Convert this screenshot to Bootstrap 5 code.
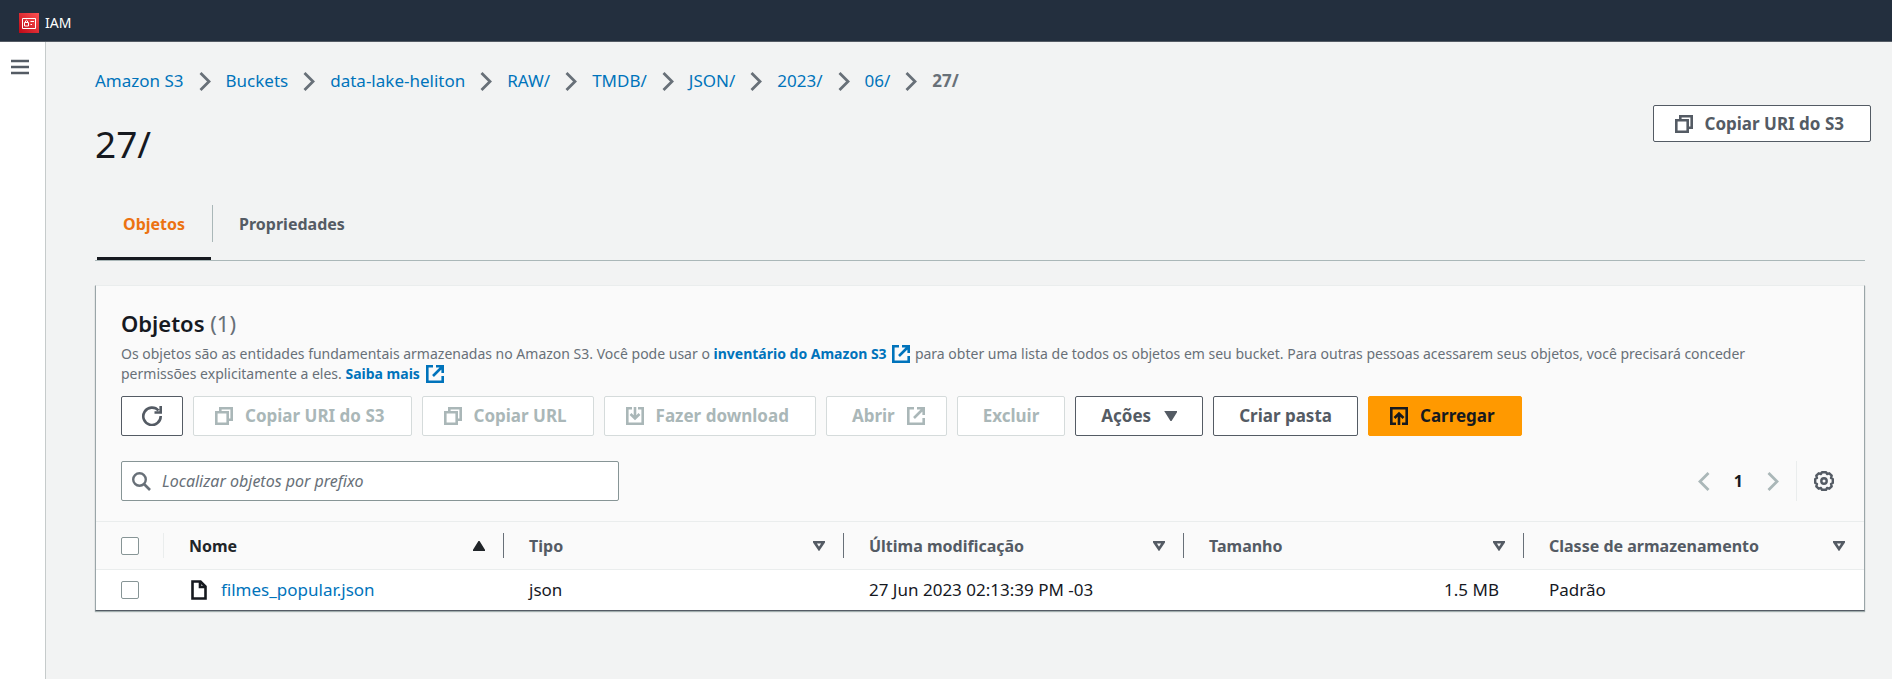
<!DOCTYPE html>
<html lang="pt-BR">
<head>
<meta charset="utf-8">
<meta name="viewport" content="width=device-width, initial-scale=1">
<title>27/ - Amazon S3</title>
<link href="https://cdn.jsdelivr.net/npm/bootstrap@5.3.0/dist/css/bootstrap.min.css" rel="stylesheet">
<script src="https://cdn.jsdelivr.net/npm/bootstrap@5.3.0/dist/js/bootstrap.bundle.min.js" defer></script>
<style>
:root { --ink: #16191f; --slate: #545b64; --muted: #687078; --blue: #0073bb; --line: #eaeded; --steel: #aab7b8; }
body { font-family: "Noto Sans", "Open Sans", sans-serif; font-size: 17px; line-height: 22px; color: var(--ink); background: #f2f3f3; }
a { color: var(--blue); text-decoration: none; }
a:hover { color: #0a4a74; text-decoration: underline; }
svg { display: block; flex: none; fill: none; stroke: currentColor; stroke-width: 2; }
.top-bar { height: 42px; background: #232f3e; border-bottom: 1px solid #545b64; padding: 4px 19px 0; }
.top-bar a { color: #fff; font-size: 14px; gap: 6px; }
.side-rail { width: 46px; background: #fff; border-right: 1px solid #c6cbcb; padding: 16px 0 0 10px; }
.icon-btn { background: none; border: 0; padding: 0; color: var(--slate); }
.page-main { padding: 28px 27px 28px 49px; min-width: 0; }
.crumbs { gap: 15px; }
.crumbs li { display: flex; align-items: center; gap: 15px; }
.crumbs svg, .muted-ink { color: var(--muted); }
.title-row { margin: 13px -6px 0 0; }
.page-title { font-size: 37px; line-height: 44px; font-weight: 400; margin: 17px 0 0; }
.aws-btn { --bs-btn-font-size: 17px; --bs-btn-font-weight: 700; --bs-btn-line-height: 22px; --bs-btn-border-radius: 2px; --bs-btn-padding-x: 25px; --bs-btn-padding-y: 0;
  --bs-btn-color: var(--slate); --bs-btn-bg: #fff; --bs-btn-border-color: var(--slate); --bs-btn-hover-color: var(--ink); --bs-btn-hover-bg: #fafafa; --bs-btn-hover-border-color: var(--ink);
  --bs-btn-disabled-color: var(--steel); --bs-btn-disabled-bg: #fff; --bs-btn-disabled-border-color: #d5dbdb; --bs-btn-disabled-opacity: 1;
  display: inline-flex; align-items: center; justify-content: center; gap: 12px; height: 40px; white-space: nowrap; }
.aws-btn.lead-icon { padding-left: 21px; padding-right: 26px; }
.aws-btn.trail-icon { padding-right: 21px; }
.aws-btn.short { height: 37px; }
.aws-btn.orange { --bs-btn-color: var(--ink); --bs-btn-bg: #f90; --bs-btn-border-color: #f90; --bs-btn-hover-bg: #ec7211; --bs-btn-hover-border-color: #ec7211; }
.tab-strip { margin-top: 39px; border-bottom: 1px solid var(--steel); padding-left: 2px; }
.tab-strip li { display: flex; }
.tab-strip a { display: block; height: 55px; padding: 8px 26px 0; font-size: 16px; font-weight: 700; color: var(--slate); border-bottom: 3px solid transparent; }
.tab-strip a.active { color: #ec7211; border-bottom-color: var(--ink); }
.tab-strip li + li::before { content: ""; width: 1px; height: 37px; background: var(--steel); margin-left: 1px; }
.panel { margin-top: 24px; background: #fff; border: 1px solid #9aa5a8; border-top-color: var(--line); border-bottom-color: #545b64; box-shadow: 0 1px 1px #00202055; }
.panel-top { background: #fafafa; padding: 23px 25px 20px; }
.panel-top h2 { font-size: 22px; line-height: 28px; font-weight: 600; margin: 0; }
.intro { font-size: 14px; line-height: 20px; color: var(--muted); margin: 7px 0 0; padding-right: 48px; }
.intro a { font-weight: 700; }
.intro svg { display: inline-block; vertical-align: -4px; margin: 0 1px 0 2px; }
.actions { gap: 10px; margin-top: 12px; }
.tools { margin-top: 25px; }
.search-box { width: 498px; border: 1px solid #879596; border-radius: 2px; height: 40px; background: #fff; color: var(--muted); padding: 0 10px; gap: 11px; }
.search-box input { border: 0; outline: 0; width: 100%; font-size: 16px; padding: 0; color: var(--ink); background: none; }
.search-box input::placeholder { font-style: italic; color: var(--muted); }
.pager { gap: 24px; font-size: 16px; font-weight: 700; padding-right: 17px; border-right: 1px solid var(--line); height: 40px; }
.pager .icon-btn { color: var(--steel); }
.objects { table-layout: fixed; width: 100%; border-collapse: collapse; }
.objects .pick { width: 68px; }
.objects th, .objects td { padding: 0 0 0 25px; }
.objects thead tr { height: 48px; background: #fafafa; border-top: 1px solid var(--line); border-bottom: 1px solid var(--line); font-size: 16px; color: var(--slate); }
.objects tbody tr { height: 40px; }
.head-cell { display: flex; align-items: center; justify-content: space-between; height: 25px; padding-right: 18px; border-right: 1px solid #687078; }
.objects th.pick .head-cell { border-color: var(--line); }
.objects th:last-child .head-cell { border-color: transparent; }
.objects td.size-cell { text-align: right; padding-right: 25px; }
.file-cell { gap: 14px; padding-left: 2px; }
.objects .form-check-input { display: block; width: 18px; height: 18px; margin: 0; border-color: #879596; border-radius: 2px; }
</style>
</head>
<body class="d-flex flex-column min-vh-100">
<svg width="0" height="0" class="position-absolute" aria-hidden="true">
  <symbol id="chev" viewBox="0 0 12 19"><path d="M1.500 1l8.500 8.500-8.500 8.500" stroke-width="2.800"/></symbol>
  <symbol id="copy" viewBox="0 0 18 18"><path d="M1.300 5.300h11.400v11.400H1.300zM5.300 5V1.300h11.400v11.400H13" stroke-width="2.600"/></symbol>
  <symbol id="ext" viewBox="0 0 18 18"><path d="M7 1.300H1.300v15.400h15.400V11M10 1.300h6.700V8M16.500 1.500L7 11" stroke-width="2.600"/></symbol>
  <symbol id="sort" viewBox="0 0 12 10"><path d="M1.500 1.300h9L6 8z" stroke-width="2.600"/></symbol>
</svg>

<header class="top-bar d-flex align-items-center">
  <a href="#" class="d-flex align-items-center">
    <svg width="20" height="20" viewBox="0 0 20 20" aria-hidden="true">
      <defs><linearGradient id="red" x1="0" y1="1" x2="1" y2="0"><stop stop-color="#bd0816"/><stop offset="1" stop-color="#ff5252"/></linearGradient></defs>
      <path d="M0 0h20v20H0z" fill="url(#red)" stroke="none"/>
      <path d="M3.500 5.500h13v10h-13zM5.500 9.500h4v3.500h-4zM6.500 9.500V8q1-1.500 2 0v1.500M11.500 8.500h3.500M11.500 11.500h1.500" stroke="#fff" stroke-width="1"/>
    </svg>
    <span>IAM</span>
  </a>
</header>

<div class="d-flex flex-grow-1">
  <aside class="side-rail flex-shrink-0">
    <button class="icon-btn" type="button" aria-label="Abrir navegação">
      <svg width="20" height="18" viewBox="0 0 20 18"><path d="M1 3h18M1 9h18M1 15h18" stroke-width="2.400"/></svg>
    </button>
  </aside>

  <main class="page-main flex-grow-1">
    <nav aria-label="Trilha">
      <ol class="crumbs list-unstyled d-flex flex-wrap mb-0">
        <li><a href="#">Amazon S3</a><svg width="12" height="19"><use href="#chev"/></svg></li>
        <li><a href="#">Buckets</a><svg width="12" height="19"><use href="#chev"/></svg></li>
        <li><a href="#">data-lake-heliton</a><svg width="12" height="19"><use href="#chev"/></svg></li>
        <li><a href="#">RAW/</a><svg width="12" height="19"><use href="#chev"/></svg></li>
        <li><a href="#">TMDB/</a><svg width="12" height="19"><use href="#chev"/></svg></li>
        <li><a href="#">JSON/</a><svg width="12" height="19"><use href="#chev"/></svg></li>
        <li><a href="#">2023/</a><svg width="12" height="19"><use href="#chev"/></svg></li>
        <li><a href="#">06/</a><svg width="12" height="19"><use href="#chev"/></svg></li>
        <li class="fw-bold muted-ink" aria-current="page">27/</li>
      </ol>
    </nav>

    <div class="title-row d-flex justify-content-between align-items-start">
      <h1 class="page-title">27/</h1>
      <button type="button" class="btn aws-btn lead-icon short"><svg width="18" height="18"><use href="#copy"/></svg>Copiar URI do S3</button>
    </div>

    <ul class="tab-strip list-unstyled d-flex mb-0">
      <li><a href="#" class="active" aria-current="true">Objetos</a></li>
      <li><a href="#">Propriedades</a></li>
    </ul>

    <section class="panel">
      <div class="panel-top">
        <h2>Objetos <span class="fw-normal muted-ink">(1)</span></h2>
        <p class="intro">Os objetos são as entidades fundamentais armazenadas no Amazon S3. Você pode usar o <a href="#">inventário do Amazon S3 <svg width="18" height="18"><use href="#ext"/></svg></a> para obter uma lista de todos os objetos em seu bucket. Para outras pessoas acessarem seus objetos, você precisará conceder permissões explicitamente a eles. <a href="#">Saiba mais <svg width="18" height="18"><use href="#ext"/></svg></a></p>

        <div class="actions d-flex flex-wrap">
          <button type="button" class="btn aws-btn px-3" aria-label="Atualizar"><svg width="28" height="20" viewBox="-4 0 28 20"><path d="M16.500 4.500A8.700 8.700 0 1 0 18.700 10M18.700 0v6.500H12.500" stroke-width="2.600"/></svg></button>
          <button type="button" class="btn aws-btn lead-icon" disabled><svg width="18" height="18"><use href="#copy"/></svg>Copiar URI do S3</button>
          <button type="button" class="btn aws-btn lead-icon" disabled><svg width="18" height="18"><use href="#copy"/></svg>Copiar URL</button>
          <button type="button" class="btn aws-btn lead-icon" disabled><svg width="18" height="18" viewBox="0 0 18 18"><path d="M6 1.300H1.300v15.400h15.400V1.300H12M9 0v12M4.500 7L9 11.500 13.500 7" stroke-width="2.600"/></svg>Fazer download</button>
          <button type="button" class="btn aws-btn trail-icon" disabled>Abrir<svg width="18" height="18"><use href="#ext"/></svg></button>
          <button type="button" class="btn aws-btn" disabled>Excluir</button>
          <button type="button" class="btn aws-btn" aria-haspopup="true">Ações<svg width="14" height="10" viewBox="-2 0 14 10"><path d="M1 1h10L6 9z" fill="currentColor"/></svg></button>
          <button type="button" class="btn aws-btn">Criar pasta</button>
          <button type="button" class="btn aws-btn lead-icon orange"><svg width="18" height="18" viewBox="0 0 18 18"><path d="M6 16.700H1.300V1.300h15.400v15.400H12M9 18V6.500M4.500 11L9 6.500l4.500 4.500" stroke-width="2.600"/></svg>Carregar</button>
        </div>

        <div class="tools d-flex flex-wrap justify-content-between align-items-center">
          <div class="search-box d-flex align-items-center">
            <svg width="19" height="19" viewBox="0 0 19 19"><circle cx="7.500" cy="7.500" r="6.300" stroke-width="2.400"/><path d="M12 12l6 6" stroke-width="2.600"/></svg>
            <input type="search" aria-label="Localizar objetos por prefixo" placeholder="Localizar objetos por prefixo">
          </div>
          <div class="d-flex align-items-center pe-1">
            <div class="pager d-flex align-items-center">
              <button class="icon-btn" type="button" aria-label="Página anterior"><svg width="12" height="19" viewBox="0 0 12 19"><path d="M10.500 1L2 9.500l8.500 8.500" stroke-width="2.800"/></svg></button>
              <span>1</span>
              <button class="icon-btn" type="button" aria-label="Próxima página"><svg width="12" height="19"><use href="#chev"/></svg></button>
            </div>
            <button class="icon-btn ms-3" type="button" aria-label="Preferências">
              <svg width="22" height="22" viewBox="0 0 22 22"><circle cx="11" cy="11" r="2.700" stroke-width="2.400"/><path d="M9 2.200h4l1 1.800 2.300-.7 2.400 2.400L18 8l1.800 1v4L18 14l.7 2.300-2.400 2.400L14 18l-1 1.800H9L8 18l-2.300.7-2.400-2.400L4 14l-1.800-1V9L4 8l-.7-2.300 2.400-2.400L8 4z" stroke-width="2.400" stroke-linejoin="round"/></svg>
            </button>
          </div>
        </div>
      </div>

      <table class="objects">
        <thead>
          <tr>
            <th class="pick" scope="col"><div class="head-cell"><input class="form-check-input" type="checkbox" aria-label="Selecionar todos"></div></th>
            <th scope="col" class="text-body"><div class="head-cell">Nome<svg width="12" height="10" viewBox="0 0 12 10"><path d="M1 9h10L6 1z" fill="currentColor"/></svg></div></th>
            <th scope="col"><div class="head-cell">Tipo<svg width="12" height="10"><use href="#sort"/></svg></div></th>
            <th scope="col"><div class="head-cell">Última modificação<svg width="12" height="10"><use href="#sort"/></svg></div></th>
            <th scope="col"><div class="head-cell">Tamanho<svg width="12" height="10"><use href="#sort"/></svg></div></th>
            <th scope="col"><div class="head-cell">Classe de armazenamento<svg width="12" height="10"><use href="#sort"/></svg></div></th>
          </tr>
        </thead>
        <tbody>
          <tr>
            <td><input class="form-check-input" type="checkbox" aria-label="Selecionar filmes_popular.json"></td>
            <td><div class="file-cell d-flex align-items-center"><svg width="16" height="20" viewBox="0 0 16 20"><path d="M1.500 1.500h8l5 5v12h-13zM9 1.500V7h5.500" stroke-width="2.600"/></svg><a href="#">filmes_popular.json</a></div></td>
            <td>json</td>
            <td>27 Jun 2023 02:13:39 PM -03</td>
            <td class="size-cell">1.5 MB</td>
            <td>Padrão</td>
          </tr>
        </tbody>
      </table>
    </section>
  </main>
</div>
</body>
</html>
